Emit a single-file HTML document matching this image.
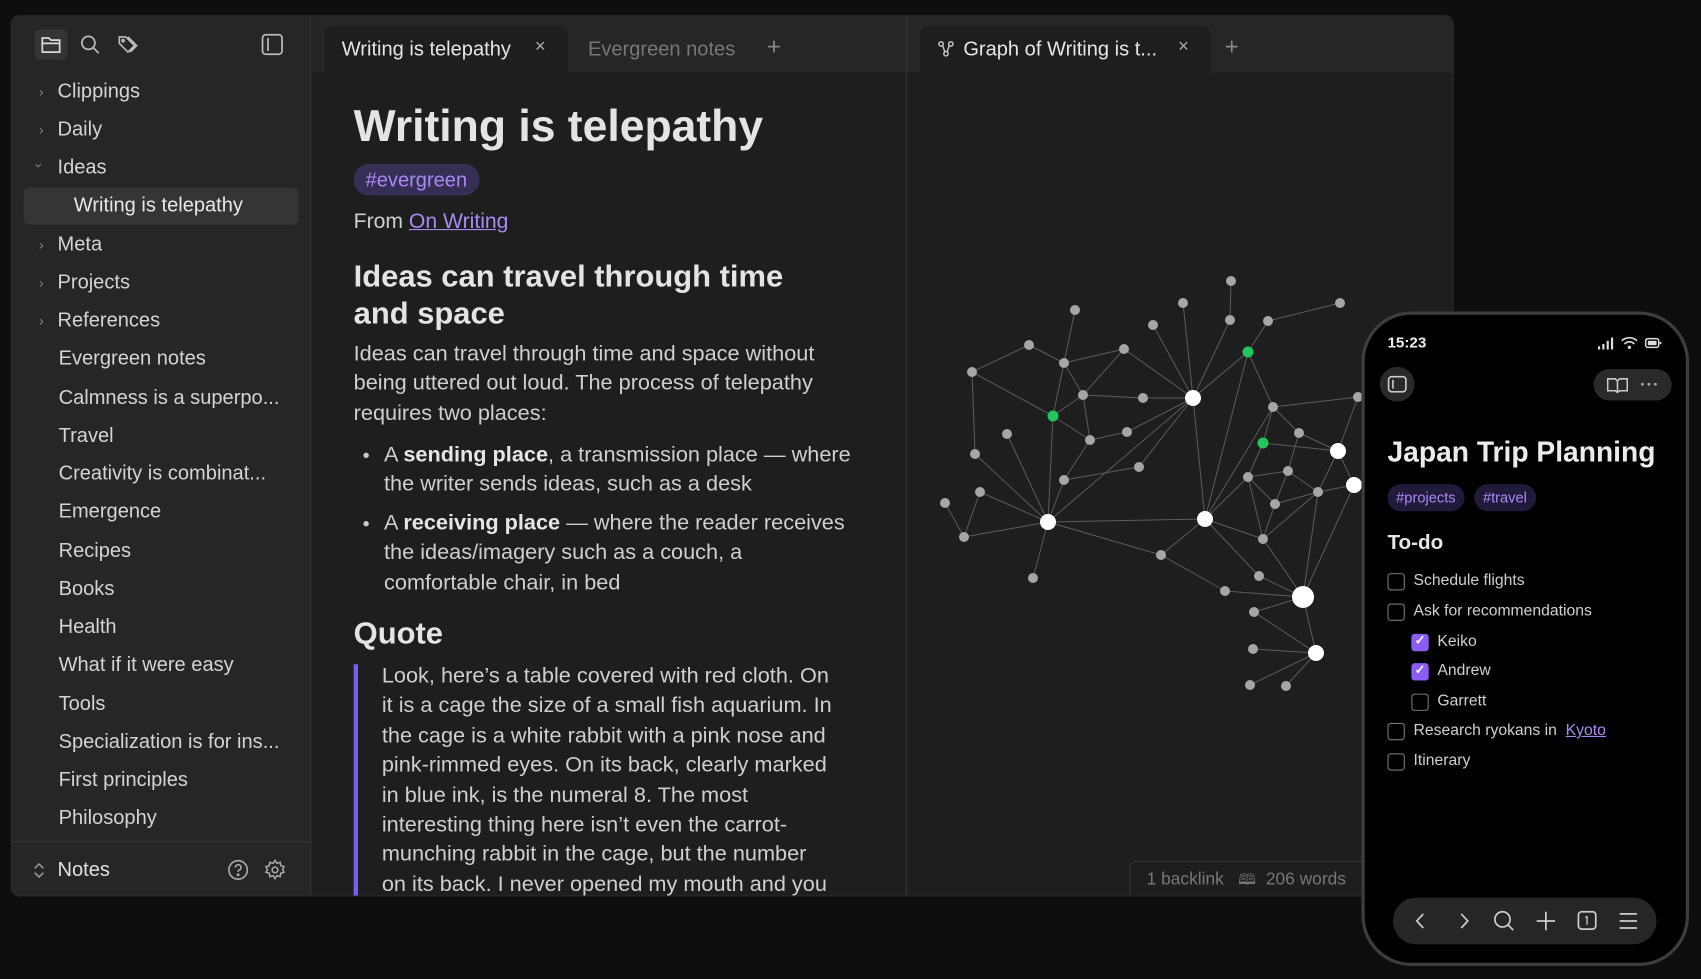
<!DOCTYPE html>
<html><head><meta charset="utf-8"><style>
*{margin:0;padding:0;box-sizing:border-box}
html,body{width:1701px;height:979px;overflow:hidden;background:#0e0e0e;font-family:"Liberation Sans",sans-serif}
.w{position:absolute;left:0;top:0;width:1568px;height:902px;transform:scale(1.08482,1.0854);transform-origin:0 0}
.a{position:absolute;white-space:nowrap}
.win{position:absolute;left:10px;top:14px;width:1330px;height:812px;background:#1e1e1e;border-radius:8px;overflow:hidden;border:1px solid #2c2c2c}
.side{position:absolute;left:0;top:0;width:276px;height:812px;background:#262626;border-right:1px solid #333}
.si{position:absolute;font-size:18.5px;color:#d4d4d4;white-space:nowrap}
.chev{position:absolute;color:#888;font-size:13px}
.body{color:#cfcfcf;font-size:20px;line-height:27.4px}
.ph{position:absolute;left:1255px;top:287px;width:302px;height:603px;border-radius:46px;border:3px solid #3d3d3d;background:#000;overflow:hidden}
.cb{position:absolute;width:16px;height:16px;border:1.5px solid #777;border-radius:3px}
.cbk{background:#8b5cf6;border-color:#8b5cf6}
.pt{position:absolute;font-size:14.5px;color:#cfcfcf;white-space:nowrap}
</style></head><body>
<div class="w">
<div class="win">
 <div class="side">
  <div style="position:absolute;left:21px;top:12px;width:30px;height:28px;background:#353535;border-radius:5px"></div>
  <svg class="a" style="left:26px;top:17px" width="20" height="18" viewBox="0 0 20 18" fill="none" stroke="#d8d8d8" stroke-width="1.6"><path d="M2 3h6l2 2h8v11H2z M2 8h16"/></svg>
  <svg class="a" style="left:62px;top:16px" width="20" height="20" viewBox="0 0 20 20" fill="none" stroke="#bbb" stroke-width="1.6"><circle cx="8.5" cy="8.5" r="6"/><path d="M13 13l5 5"/></svg>
  <svg class="a" style="left:97px;top:16px" width="22" height="20" viewBox="0 0 22 20" fill="none" stroke="#bbb" stroke-width="1.5"><path d="M2 3v6l8 8 6-6-8-8z M10 3l8 8-6 6"/><circle cx="5.5" cy="6.5" r="1"/></svg>
  <svg class="a" style="left:229px;top:15px" width="22" height="22" viewBox="0 0 22 22" fill="none" stroke="#bbb" stroke-width="1.6"><rect x="2" y="2" width="18" height="18" rx="3"/><path d="M7 5v12"/></svg>
  <span class="chev" style="left:25px;top:62px">›</span><span class="si" style="left:42px;top:58px">Clippings</span>
  <span class="chev" style="left:25px;top:97px">›</span><span class="si" style="left:42px;top:93px">Daily</span>
  <span class="chev" style="left:23px;top:130px;transform:rotate(90deg)">›</span><span class="si" style="left:42px;top:128px">Ideas</span>
  <div style="position:absolute;left:11px;top:158px;width:253px;height:34px;background:#353535;border-radius:5px"></div>
  <span class="si" style="left:57px;top:163px;color:#e8e8e8">Writing is telepathy</span>
  <span class="chev" style="left:25px;top:203px">›</span><span class="si" style="left:42px;top:199px">Meta</span>
  <span class="chev" style="left:25px;top:238px">›</span><span class="si" style="left:42px;top:234px">Projects</span>
  <span class="chev" style="left:25px;top:273px">›</span><span class="si" style="left:42px;top:269px">References</span>
  <span class="si" style="left:43px;top:304px">Evergreen notes</span>
  <span class="si" style="left:43px;top:340px">Calmness is a superpo...</span>
  <span class="si" style="left:43px;top:375px">Travel</span>
  <span class="si" style="left:43px;top:410px">Creativity is combinat...</span>
  <span class="si" style="left:43px;top:445px">Emergence</span>
  <span class="si" style="left:43px;top:481px">Recipes</span>
  <span class="si" style="left:43px;top:516px">Books</span>
  <span class="si" style="left:43px;top:551px">Health</span>
  <span class="si" style="left:43px;top:586px">What if it were easy</span>
  <span class="si" style="left:43px;top:622px">Tools</span>
  <span class="si" style="left:43px;top:657px">Specialization is for ins...</span>
  <span class="si" style="left:43px;top:692px">First principles</span>
  <span class="si" style="left:43px;top:727px">Philosophy</span>
  <div style="position:absolute;left:0;top:760px;width:276px;height:1px;background:#363636"></div>
  <svg class="a" style="left:19px;top:779px" width="12" height="16" viewBox="0 0 12 16" fill="none" stroke="#999" stroke-width="1.4"><path d="M2 6l4-4 4 4M2 10l4 4 4-4"/></svg>
  <span class="si" style="left:42px;top:775px;color:#e0e0e0">Notes</span>
  <svg class="a" style="left:198px;top:776px" width="21" height="21" viewBox="0 0 21 21" fill="none" stroke="#aaa" stroke-width="1.5"><circle cx="10.5" cy="10.5" r="8.5"/><path d="M8 8.3a2.6 2.6 0 1 1 3.4 2.4c-.7.3-.9.8-.9 1.5"/><circle cx="10.5" cy="15" r=".6" fill="#aaa"/></svg>
  <svg class="a" style="left:232px;top:776px" width="21" height="21" viewBox="0 0 24 24" fill="none" stroke="#aaa" stroke-width="1.6"><circle cx="12" cy="12" r="3"/><path d="M12 2l2 3 3.5-1 .5 3.5 3.5 1-1.5 3 1.5 3-3.5 1-.5 3.5-3.5-1-2 3-2-3-3.5 1-.5-3.5-3.5-1 1.5-3-1.5-3 3.5-1 .5-3.5 3.5 1z"/></svg>
 </div>
 <div style="position:absolute;left:277px;top:0;width:1053px;height:52px;background:#262626"></div>
 <div style="position:absolute;left:288px;top:9px;width:224px;height:43px;background:#1e1e1e;border-radius:8px 8px 0 0"></div>
 <span class="a" style="left:304px;top:19px;font-size:18.5px;color:#e6e6e6">Writing is telepathy</span>
 <span class="a" style="left:482px;top:18px;font-size:17px;color:#aaa">×</span>
 <span class="a" style="left:531px;top:19px;font-size:18.5px;color:#777">Evergreen notes</span>
 <span class="a" style="left:696px;top:15px;font-size:22px;color:#888">+</span>
 <div style="position:absolute;left:824px;top:0;width:1px;height:812px;background:#333"></div>
 <div style="position:absolute;left:837px;top:9px;width:268px;height:43px;background:#1e1e1e;border-radius:8px 8px 0 0"></div>
 <svg class="a" style="left:853px;top:22px" width="16" height="16" viewBox="0 0 16 16" fill="none" stroke="#ccc" stroke-width="1.3"><circle cx="3.5" cy="3.5" r="2"/><circle cx="12.5" cy="3.5" r="2"/><circle cx="8" cy="12.5" r="2"/><path d="M5 5l2 6M11 5l-2 6"/></svg>
 <span class="a" style="left:877px;top:19px;font-size:18.5px;color:#e6e6e6">Graph of Writing is t...</span>
 <span class="a" style="left:1075px;top:18px;font-size:17px;color:#aaa">×</span>
 <span class="a" style="left:1118px;top:15px;font-size:22px;color:#888">+</span>
 <div class="a" style="left:315px;top:78px;font-size:41px;font-weight:bold;color:#e4e4e4">Writing is telepathy</div>
 <div class="a" style="left:315px;top:136px;height:29px;padding:0 11px;border-radius:14px;background:#372e56;color:#a98af5;font-size:18.5px;line-height:29px">#evergreen</div>
 <div class="a" style="left:315px;top:178px;font-size:19.5px;color:#cfcfcf">From <span style="color:#a98af5;text-decoration:underline">On Writing</span></div>
 <div class="a" style="left:315px;top:223px;font-size:28.5px;font-weight:bold;color:#e4e4e4;line-height:34px">Ideas can travel through time<br>and space</div>
 <div class="a body" style="left:315px;top:298px">Ideas can travel through time and space without<br>being uttered out loud. The process of telepathy<br>requires two places:</div>
 <div class="a" style="left:324px;top:402px;width:5px;height:5px;border-radius:50%;background:#c9c9c9"></div>
 <div class="a body" style="left:343px;top:391px">A <b style="color:#e6e6e6">sending place</b>, a transmission place — where<br>the writer sends ideas, such as a desk</div>
 <div class="a" style="left:324px;top:465px;width:5px;height:5px;border-radius:50%;background:#c9c9c9"></div>
 <div class="a body" style="left:343px;top:454px">A <b style="color:#e6e6e6">receiving place</b> — where the reader receives<br>the ideas/imagery such as a couch, a<br>comfortable chair, in bed</div>
 <div class="a" style="left:315px;top:553px;font-size:28.5px;font-weight:bold;color:#e4e4e4">Quote</div>
 <div class="a" style="left:315px;top:597px;width:4px;height:220px;background:#7c5cf4"></div>
 <div class="a body" style="left:341px;top:595px">Look, here’s a table covered with red cloth. On<br>it is a cage the size of a small fish aquarium. In<br>the cage is a white rabbit with a pink nose and<br>pink-rimmed eyes. On its back, clearly marked<br>in blue ink, is the numeral 8. The most<br>interesting thing here isn’t even the carrot-<br>munching rabbit in the cage, but the number<br>on its back. I never opened my mouth and you</div>
 <div class="a" style="left:1030px;top:778px;width:240px;height:40px;background:#1e1e1e;border:1px solid #333;border-radius:6px 0 0 0"></div>
 <div class="a" style="left:1046px;top:785px;font-size:16px;color:#777">1 backlink &nbsp; <span style="font-size:14px">🕮</span> &nbsp;206 words</div>
</div>
</div>

<svg style="position:absolute;left:0;top:0" width="1701" height="979">
<defs><clipPath id="c"><rect x="906" y="72" width="548" height="824"/></clipPath></defs>
<g clip-path="url(#c)" stroke="#5c5c5c" stroke-width="1">
<path d="M1231 281L1230 320M1230 320L1193 398M1183 303L1193 398M1153 325L1193 398M1124 349L1193 398M1143 398L1193 398M1127 432L1193 398M1139 467L1193 398M1048 522L1193 398M1248 352L1193 398M1248 352L1268 321M1268 321L1340 303M1248 352L1205 519M1248 352L1273 407M1193 398L1205 519M1075 310L1064 363M1029 345L1064 363M1029 345L972 372M972 372L1053 416M972 372L975 454M1064 363L1124 349M1064 363L1083 395M1064 363L1053 416M1124 349L1083 395M1083 395L1143 398M1083 395L1053 416M1083 395L1090 440M1053 416L1090 440M1053 416L1048 522M1090 440L1127 432M1090 440L1064 480M1064 480L1139 467M1064 480L1048 522M1007 434L1048 522M975 454L1048 522M980 492L1048 522M980 492L964 537M945 503L964 537M964 537L1048 522M1033 578L1048 522M1048 522L1205 519M1048 522L1161 555M1161 555L1205 519M1161 555L1225 591M1225 591L1303 597M1205 519L1273 407M1205 519L1248 477M1205 519L1263 539M1205 519L1259 576M1273 407L1299 433M1273 407L1358 397M1263 443L1273 407M1263 443L1248 477M1263 443L1338 451M1299 433L1338 451M1299 433L1288 471M1248 477L1288 471M1248 477L1275 504M1248 477L1263 539M1288 471L1275 504M1288 471L1318 492M1275 504L1318 492M1275 504L1263 539M1263 539L1318 492M1263 539L1303 597M1318 492L1338 451M1318 492L1354 485M1318 492L1303 597M1338 451L1354 485M1338 451L1358 397M1354 485L1303 597M1259 576L1303 597M1254 612L1303 597M1254 612L1316 653M1303 597L1316 653M1253 649L1316 653M1250 685L1316 653M1286 686L1316 653"/>
<g fill="#a6a6a6" stroke="none">
<circle cx="1231" cy="281" r="5"/><circle cx="1183" cy="303" r="5"/><circle cx="1230" cy="320" r="5"/><circle cx="1153" cy="325" r="5"/><circle cx="1268" cy="321" r="5"/><circle cx="1340" cy="303" r="5"/><circle cx="1075" cy="310" r="5"/><circle cx="1029" cy="345" r="5"/><circle cx="1064" cy="363" r="5"/><circle cx="1124" cy="349" r="5"/><circle cx="972" cy="372" r="5"/><circle cx="1083" cy="395" r="5"/><circle cx="1143" cy="398" r="5"/><circle cx="1007" cy="434" r="5"/><circle cx="1090" cy="440" r="5"/><circle cx="1127" cy="432" r="5"/><circle cx="975" cy="454" r="5"/><circle cx="1139" cy="467" r="5"/><circle cx="1064" cy="480" r="5"/><circle cx="980" cy="492" r="5"/><circle cx="945" cy="503" r="5"/><circle cx="964" cy="537" r="5"/><circle cx="1033" cy="578" r="5"/><circle cx="1161" cy="555" r="5"/><circle cx="1273" cy="407" r="5"/><circle cx="1299" cy="433" r="5"/><circle cx="1248" cy="477" r="5"/><circle cx="1288" cy="471" r="5"/><circle cx="1275" cy="504" r="5"/><circle cx="1318" cy="492" r="5"/><circle cx="1263" cy="539" r="5"/><circle cx="1259" cy="576" r="5"/><circle cx="1225" cy="591" r="5"/><circle cx="1254" cy="612" r="5"/><circle cx="1253" cy="649" r="5"/><circle cx="1250" cy="685" r="5"/><circle cx="1286" cy="686" r="5"/><circle cx="1358" cy="397" r="5"/>
</g>
<g fill="#22c55e" stroke="none"><circle cx="1248" cy="352" r="5.5"/><circle cx="1053" cy="416" r="5.5"/><circle cx="1263" cy="443" r="5.5"/></g>
<g fill="#fff" stroke="none"><circle cx="1193" cy="398" r="8"/><circle cx="1048" cy="522" r="8"/><circle cx="1205" cy="519" r="8"/><circle cx="1303" cy="597" r="11"/><circle cx="1316" cy="653" r="8"/><circle cx="1338" cy="451" r="8"/><circle cx="1354" cy="485" r="8"/></g>
</g>
</svg>

<div class="w">
<div class="ph">
 <span class="a" style="left:21px;top:17px;font-size:14px;font-weight:bold;color:#eee">15:23</span>
 <svg class="a" style="left:215px;top:19px" width="60" height="14" viewBox="0 0 60 14" fill="#ddd"><rect x="0" y="10" width="2" height="3"/><rect x="4" y="8" width="2" height="5"/><rect x="8" y="5" width="2" height="8"/><rect x="12" y="2" width="2" height="11"/><path d="M22 5a10 10 0 0 1 14 0M24.5 8a6 6 0 0 1 9 0" stroke="#ddd" stroke-width="1.5" fill="none"/><circle cx="29" cy="11" r="1.5"/><rect x="44" y="3" width="12" height="8" rx="2" fill="none" stroke="#ddd" stroke-width="1.4"/><rect x="46" y="5" width="8" height="4"/><rect x="57" y="6" width="1.5" height="2"/></svg>
 <div class="a" style="left:14px;top:48px;width:32px;height:32px;border-radius:50%;background:#2a2a2a"></div>
 <svg class="a" style="left:21px;top:56px" width="18" height="16" viewBox="0 0 18 16" fill="none" stroke="#ccc" stroke-width="1.5"><rect x="1" y="1" width="16" height="14" rx="3"/><path d="M5 4v8"/></svg>
 <div class="a" style="left:211px;top:50px;width:72px;height:29px;border-radius:15px;background:#2a2a2a"></div>
 <svg class="a" style="left:223px;top:57px" width="20" height="16" viewBox="0 0 20 16" fill="none" stroke="#ccc" stroke-width="1.4"><path d="M1 2h7l2 2 2-2h7v11h-7l-2 1.5L8 13H1zM10 4v10"/></svg>
 <svg class="a" style="left:253px;top:62px" width="18" height="4" viewBox="0 0 18 4" fill="#aaa"><circle cx="3" cy="2" r="1.3"/><circle cx="9" cy="2" r="1.3"/><circle cx="15" cy="2" r="1.3"/></svg>
 <div class="a" style="left:21px;top:111px;font-size:26px;font-weight:bold;color:#ececec">Japan Trip Planning</div>
 <div class="a" style="left:21px;top:156px;height:25px;padding:0 8px;border-radius:13px;background:#221a3b;color:#a98af5;font-size:13.5px;line-height:25px">#projects</div>
 <div class="a" style="left:101px;top:156px;height:25px;padding:0 8px;border-radius:13px;background:#221a3b;color:#a98af5;font-size:13.5px;line-height:25px">#travel</div>
 <div class="a" style="left:21px;top:200px;font-size:19px;font-weight:bold;color:#e6e6e6">To-do</div>
 <div class="cb" style="left:21px;top:238px"></div><span class="pt" style="left:45px;top:237px">Schedule flights</span>
 <div class="cb" style="left:21px;top:266px"></div><span class="pt" style="left:45px;top:265px">Ask for recommendations</span>
 <div class="cb cbk" style="left:43px;top:294px"></div><span class="a" style="left:46px;top:293px;color:#fff;font-size:12px;font-weight:bold">✓</span><span class="pt" style="left:67px;top:293px">Keiko</span>
 <div class="cb cbk" style="left:43px;top:321px"></div><span class="a" style="left:46px;top:320px;color:#fff;font-size:12px;font-weight:bold">✓</span><span class="pt" style="left:67px;top:320px">Andrew</span>
 <div class="cb" style="left:43px;top:349px"></div><span class="pt" style="left:67px;top:348px">Garrett</span>
 <div class="cb" style="left:21px;top:376px"></div><span class="pt" style="left:45px;top:375px">Research ryokans in &nbsp;<span style="color:#a98af5;text-decoration:underline">Kyoto</span></span>
 <div class="cb" style="left:21px;top:404px"></div><span class="pt" style="left:45px;top:403px">Itinerary</span>
 <div class="a" style="left:26px;top:537px;width:243px;height:43px;border-radius:22px;background:#262626"></div>
 <svg class="a" style="left:26px;top:537px" width="243" height="43" viewBox="0 0 243 43" fill="none" stroke="#ccc" stroke-width="1.6"><path d="M28 15l-6 6.5 6 6.5M63 15l6 6.5-6 6.5"/><circle cx="101" cy="20" r="7"/><path d="M106 25l5 5M141 13v17M132.5 21.5h17"/><rect x="171" y="13" width="16" height="16" rx="3"/><path d="M179 17v8M177.5 18.5l1.5-1.5" stroke-width="1.2"/><path d="M209 15h16M209 21.5h16M209 28h16"/></svg>
</div>
</div>
</body></html>
